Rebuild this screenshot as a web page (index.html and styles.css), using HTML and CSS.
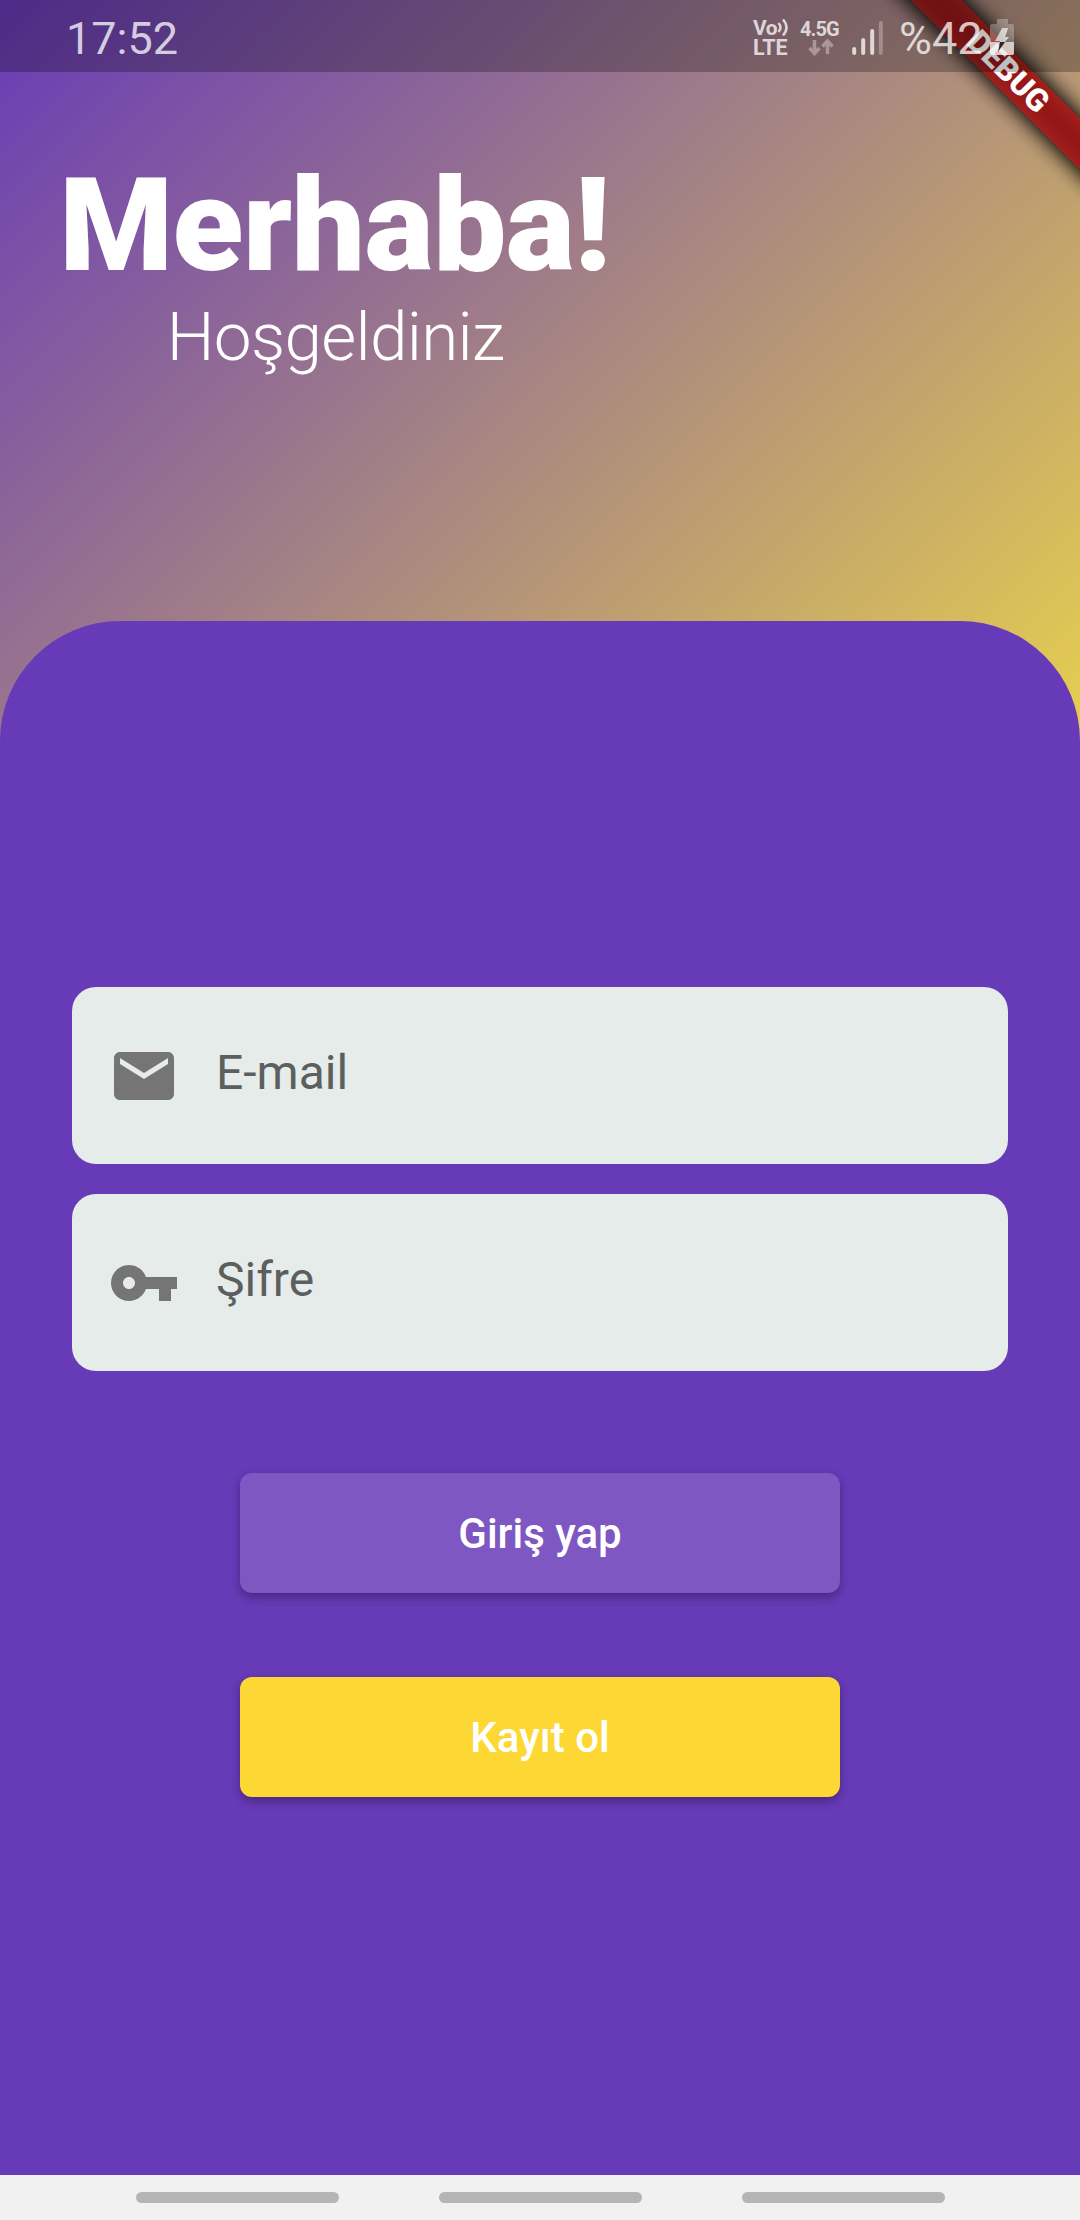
FILE: index.html
```html
<!DOCTYPE html>
<html lang="tr">
<head>
<meta charset="utf-8">
<title>Giriş</title>
<link rel="stylesheet" href="styles.css">
</head>
<body>
<div class="screen">
  <div class="debug-corner"><div class="debug-banner"><span>DEBUG</span></div></div>
  <header class="status-bar">
    <span class="clock">17:52</span>
    <div class="status-icons">
      <div class="volte">
        <span class="vo">Vo<svg class="waves" viewBox="0 0 12 20"><path d="M1.500 5q4 4.500 0 9M6 1.500q7 8 0 16" /></svg></span>
        <span class="lte">LTE</span>
      </div>
      <div class="network">
        <span>4.5G</span>
        <svg class="arrows" viewBox="0 0 26 17"><path d="M6.500 1v12M1.500 9l5 5.500 5-5.500M19.500 15V3M14.500 7.500l5-5.500 5 5.500"/></svg>
      </div>
      <svg class="signal" viewBox="0 0 32 34"><path d="M2.200 28v4M11.200 19v13M20.200 10v22"/><path class="dim" d="M28.800 2v30"/></svg>
      <span class="percent">%42</span>
      <svg class="battery" viewBox="0 0 24 36"><path class="dim" d="M7 0h11v5h4q2 0 2 2v16h-9l3-5h-4l3-9h-5L5 22h5v1H0V7q0-2 2-2h5z"/><path d="M12 9h6l-3 9h4l-4 5h9v11q0 2-2 2H2q-2 0-2-2V23h10v-1H5z"/><path class="spark" d="M10 23h5L8 33z"/></svg>
    </div>
  </header>
  <section class="hero">
    <h1>Merhaba!</h1>
    <p>Hoşgeldiniz</p>
  </section>
  <main class="panel">
    <form class="login">
      <label class="field"><svg viewBox="0 0 24 24"><path d="M20 4H4c-1.100 0-1.990.9-1.990 2L2 18c0 1.100.9 2 2 2h16c1.100 0 2-.9 2-2V6c0-1.100-.9-2-2-2zm0 4l-8 5-8-5V6l8 5 8-5v2z"/></svg><span>E-mail</span></label>
      <label class="field"><svg viewBox="0 0 24 24"><path d="M12.650 10C11.830 7.670 9.610 6 7 6c-3.310 0-6 2.690-6 6s2.690 6 6 6c2.610 0 4.830-1.670 5.650-4H17v4h4v-4h2v-4H12.650zM7 14c-1.100 0-2-.9-2-2s.9-2 2-2 2 .9 2 2-.9 2-2 2z"/></svg><span>Şifre</span></label>
      <button class="button sign-in" type="button">Giriş yap</button>
      <button class="button sign-up" type="button">Kayıt ol</button>
    </form>
  </main>
  <nav class="nav-bar"><i></i><i></i><i></i></nav>
</div>
</body>
</html>
```
FILE: styles.css
```css
* { box-sizing: border-box; }
body { margin: 0; font-family: Roboto, "Liberation Sans", sans-serif; }
.screen {
  position: relative;
  width: 1080px;
  height: 2220px;
  overflow: hidden;
  display: flex;
  flex-direction: column;
  background: linear-gradient(135.180deg, #673ab7, #ffeb3b) 0 0 / 1080px 1087px no-repeat #673ab7;
}
.status-bar {
  position: relative;
  height: 72px;
  flex: none;
  display: flex;
  align-items: flex-start;
  justify-content: space-between;
  padding: 0 66px 0 66px;
  background: rgba(0, 0, 0, .25);
  color: rgba(255, 255, 255, .75);
}
.clock, .percent { font-size: 45px; line-height: 52px; padding-top: 13px; }
.status-icons { display: flex; }
.volte { width: 47px; padding-top: 18px; font-size: 21px; font-weight: 700; line-height: 20px; }
.volte span { display: flex; height: 20px; }
.volte .vo { letter-spacing: -.5px; }
.volte .lte { font-size: 21.500px; }
.waves { flex: none; width: 12px; height: 20px; fill: none; stroke: currentColor; stroke-width: 2.500; }
.network { width: 51px; padding-top: 19px; font-size: 20px; font-weight: 700; line-height: 20px; letter-spacing: -.9px; }
.network span { display: block; }
.arrows { display: block; width: 26px; height: 17px; margin-left: 8px; fill: none; stroke: rgba(255, 255, 255, .35); stroke-width: 3.500; }
.signal { width: 32px; height: 34px; margin: 21px 15px 0 1px; fill: none; stroke: currentColor; stroke-width: 4; stroke-linecap: round; }
.signal .dim { stroke: rgba(255, 255, 255, .28); }
.percent { width: 91px; }
.battery { width: 24px; height: 36px; margin-top: 19px; fill: currentColor; }
.battery .dim { fill: rgba(255, 255, 255, .28); }
.battery .spark { fill: rgba(0, 0, 0, .8); }
.debug-corner { position: absolute; top: 0; right: 0; width: 260px; height: 260px; overflow: hidden; }
.debug-banner {
  position: absolute;
  right: -168px;
  top: 54px;
  width: 480px;
  height: 36px;
  transform: rotate(45deg);
  color: #fff;
  font-size: 31.500px;
  font-weight: 900;
  line-height: 36px;
  text-align: center;
}
.debug-banner::before, .debug-banner::after { content: ""; position: absolute; inset: 0; }
.debug-banner::before { background: #000; inset: -3px 0; filter: blur(10px); }
.debug-banner::after { background: rgba(183, 28, 28, .82); }
.debug-banner span { position: relative; z-index: 1; }
.hero { height: 549px; flex: none; padding: 78px 0 0 60px; color: #fff; width: 611px; text-align: center; }
.hero h1 { margin: 0 0 0 -2px; font-size: 130px; font-weight: 900; line-height: 152px; letter-spacing: -.5px; white-space: nowrap; }
.hero p { margin: -4px 0 0; font-size: 67.500px; font-weight: 300; line-height: 78px; letter-spacing: -.7px; }
.panel { flex: 1; padding: 366px 72px 0; border-radius: 120px 120px 0 0; background: #673ab7; }
.login { display: flex; flex-direction: column; }
.field {
  height: 177px;
  margin-bottom: 30px;
  padding: 0 36px;
  display: flex;
  align-items: center;
  gap: 36px;
  border-radius: 24px;
  background: #e6ecea;
  color: #5c5f5e;
  font-size: 48px;
  line-height: 56px;
}
.field svg { width: 72px; height: 72px; fill: #757575; }
.field span { position: relative; top: -3px; }
.button {
  width: 600px;
  height: 120px;
  margin: 0 auto 84px;
  padding: 2px 0 0;
  border: 0;
  border-radius: 12px;
  box-shadow: 0 6px 8px rgba(0, 0, 0, .2), 0 1px 8px rgba(0, 0, 0, .12);
  color: #fff;
  font: 500 42px/48px Roboto, "Liberation Sans", sans-serif;
}
.sign-in { margin-top: 72px; background: #7e57c2; }
.sign-up { background: #fdd835; }
.nav-bar {
  height: 45px;
  flex: none;
  display: flex;
  justify-content: center;
  gap: 100px;
  padding-top: 17px;
  background: #f1f1f1;
}
.nav-bar i { width: 203px; height: 11px; border-radius: 6px; background: #b5b5b5; }
```
